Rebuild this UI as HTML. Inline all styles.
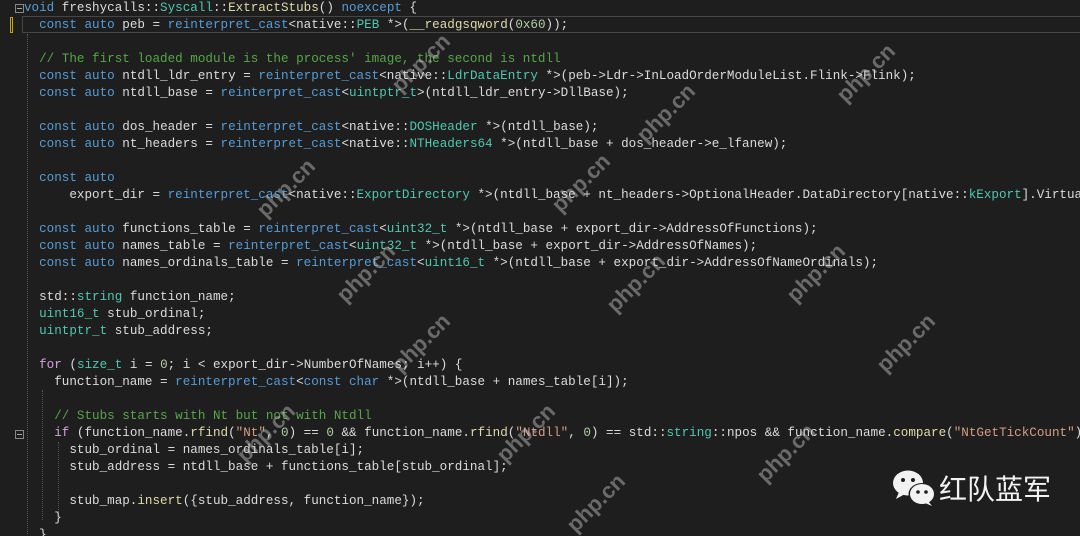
<!DOCTYPE html>
<html><head><meta charset="utf-8"><style>
html,body{margin:0;padding:0;width:1080px;height:536px;overflow:hidden;background:#1e1e1e;}
.ed{position:absolute;left:0;top:0;width:1080px;height:536px;overflow:hidden;font-family:"Liberation Mono",monospace;font-size:12.6px;color:#dcdcdc;}
.l{position:absolute;left:24px;height:17px;line-height:17px;white-space:pre;}
.k{color:#569cd6}.t{color:#4ec9b0}.f{color:#dcdcaa}.c{color:#57a64a}.s{color:#d69d85}.n{color:#b5cea8}.p{color:#d8a0df}.g{color:#b4b4b4}
.cur{position:absolute;left:22px;top:16px;width:1060px;height:17px;border:1px solid #464646;box-sizing:border-box;}
.mk{position:absolute;left:10px;top:17px;width:3px;height:16px;border:1px solid #c8a800;box-sizing:border-box;}
.guide{position:absolute;width:0;border-left:1px dotted #555;}
.fold{position:absolute;width:7px;height:7px;border:1px solid #888;font-size:0;}
.fold:after{content:"";position:absolute;left:1px;top:3px;width:5px;height:1px;background:#aaa;}
.wm{position:absolute;color:rgba(200,200,200,0.45);font-family:"Liberation Sans",sans-serif;font-weight:bold;font-size:22px;transform:rotate(-45deg);white-space:nowrap;}
.logo{position:absolute;left:893px;top:468px;font-family:"Liberation Sans","Noto Sans CJK SC",sans-serif;font-size:28px;color:#f2f2f2;}
</style></head><body><div class="ed">
<div class="cur"></div><div class="mk"></div>
<div class="fold" style="left:15px;top:4px"></div>
<div class="fold" style="left:15px;top:430px"></div>
<div class="guide" style="left:27px;top:34px;height:500px"></div>
<div class="guide" style="left:42px;top:390px;height:130px"></div>
<div class="guide" style="left:58px;top:442px;height:70px"></div>
<div class="l" style="top:0px"><span class="k">void</span> freshycalls::<span class="t">Syscall</span>::<span class="f">ExtractStubs</span>() <span class="k">noexcept</span> {</div>
<div class="l" style="top:17px">  <span class="k">const</span> <span class="k">auto</span> peb = <span class="k">reinterpret_cast</span>&lt;native::<span class="t">PEB</span> *&gt;(<span class="f">__readgsqword</span>(<span class="n">0x60</span>));</div>
<div class="l" style="top:51px">  <span class="c">// The first loaded module is the process' image, the second is ntdll</span></div>
<div class="l" style="top:68px">  <span class="k">const</span> <span class="k">auto</span> ntdll_ldr_entry = <span class="k">reinterpret_cast</span>&lt;native::<span class="t">LdrDataEntry</span> *&gt;(peb-&gt;Ldr-&gt;InLoadOrderModuleList.Flink-&gt;Flink);</div>
<div class="l" style="top:85px">  <span class="k">const</span> <span class="k">auto</span> ntdll_base = <span class="k">reinterpret_cast</span>&lt;<span class="t">uintptr_t</span>&gt;(ntdll_ldr_entry-&gt;DllBase);</div>
<div class="l" style="top:119px">  <span class="k">const</span> <span class="k">auto</span> dos_header = <span class="k">reinterpret_cast</span>&lt;native::<span class="t">DOSHeader</span> *&gt;(ntdll_base);</div>
<div class="l" style="top:136px">  <span class="k">const</span> <span class="k">auto</span> nt_headers = <span class="k">reinterpret_cast</span>&lt;native::<span class="t">NTHeaders64</span> *&gt;(ntdll_base + dos_header-&gt;e_lfanew);</div>
<div class="l" style="top:170px">  <span class="k">const</span> <span class="k">auto</span></div>
<div class="l" style="top:187px">      export_dir = <span class="k">reinterpret_cast</span>&lt;native::<span class="t">ExportDirectory</span> *&gt;(ntdll_base + nt_headers-&gt;OptionalHeader.DataDirectory[native::<span class="t">kExport</span>].Virtua</div>
<div class="l" style="top:221px">  <span class="k">const</span> <span class="k">auto</span> functions_table = <span class="k">reinterpret_cast</span>&lt;<span class="t">uint32_t</span> *&gt;(ntdll_base + export_dir-&gt;AddressOfFunctions);</div>
<div class="l" style="top:238px">  <span class="k">const</span> <span class="k">auto</span> names_table = <span class="k">reinterpret_cast</span>&lt;<span class="t">uint32_t</span> *&gt;(ntdll_base + export_dir-&gt;AddressOfNames);</div>
<div class="l" style="top:255px">  <span class="k">const</span> <span class="k">auto</span> names_ordinals_table = <span class="k">reinterpret_cast</span>&lt;<span class="t">uint16_t</span> *&gt;(ntdll_base + export_dir-&gt;AddressOfNameOrdinals);</div>
<div class="l" style="top:289px">  std::<span class="t">string</span> function_name;</div>
<div class="l" style="top:306px">  <span class="t">uint16_t</span> stub_ordinal;</div>
<div class="l" style="top:323px">  <span class="t">uintptr_t</span> stub_address;</div>
<div class="l" style="top:357px">  <span class="p">for</span> (<span class="t">size_t</span> i = <span class="n">0</span>; i &lt; export_dir-&gt;NumberOfNames; i++) {</div>
<div class="l" style="top:374px">    function_name = <span class="k">reinterpret_cast</span>&lt;<span class="k">const</span> <span class="k">char</span> *&gt;(ntdll_base + names_table[i]);</div>
<div class="l" style="top:408px">    <span class="c">// Stubs starts with Nt but not with Ntdll</span></div>
<div class="l" style="top:425px">    <span class="p">if</span> (function_name.<span class="f">rfind</span>(<span class="s">"Nt"</span>, <span class="n">0</span>) == <span class="n">0</span> &amp;&amp; function_name.<span class="f">rfind</span>(<span class="s">"Ntdll"</span>, <span class="n">0</span>) == std::<span class="t">string</span>::npos &amp;&amp; function_name.<span class="f">compare</span>(<span class="s">"NtGetTickCount"</span>)</div>
<div class="l" style="top:442px">      stub_ordinal = names_ordinals_table[i];</div>
<div class="l" style="top:459px">      stub_address = ntdll_base + functions_table[stub_ordinal];</div>
<div class="l" style="top:493px">      stub_map.<span class="f">insert</span>({stub_address, function_name});</div>
<div class="l" style="top:510px">    }</div>
<div class="l" style="top:527px">  }</div>
<div class="wm" style="left:385px;top:50px">php.cn</div>
<div class="wm" style="left:630px;top:100px">php.cn</div>
<div class="wm" style="left:830px;top:60px">php.cn</div>
<div class="wm" style="left:250px;top:175px">php.cn</div>
<div class="wm" style="left:545px;top:170px">php.cn</div>
<div class="wm" style="left:780px;top:260px">php.cn</div>
<div class="wm" style="left:330px;top:260px">php.cn</div>
<div class="wm" style="left:600px;top:270px">php.cn</div>
<div class="wm" style="left:385px;top:330px">php.cn</div>
<div class="wm" style="left:870px;top:330px">php.cn</div>
<div class="wm" style="left:230px;top:420px">php.cn</div>
<div class="wm" style="left:490px;top:420px">php.cn</div>
<div class="wm" style="left:750px;top:440px">php.cn</div>
<div class="wm" style="left:560px;top:490px">php.cn</div>
<svg style="position:absolute;left:891px;top:468px" width="48" height="40" viewBox="0 0 48 40">
<ellipse cx="17" cy="15" rx="15" ry="12.5" fill="#f2f2f2"/><path d="M8 24 L5 31 L14 26 Z" fill="#f2f2f2"/>
<circle cx="12" cy="12" r="2" fill="#1e1e1e"/><circle cx="22" cy="12" r="2" fill="#1e1e1e"/>
<ellipse cx="31" cy="26" rx="13.5" ry="11" fill="#1e1e1e"/><ellipse cx="31" cy="26" rx="12" ry="10" fill="#f2f2f2"/><path d="M37 33 L41 38 L34 35 Z" fill="#f2f2f2"/>
<circle cx="27" cy="24" r="1.8" fill="#1e1e1e"/><circle cx="35" cy="24" r="1.8" fill="#1e1e1e"/></svg>
<div class="logo" style="left:939px">红队蓝军</div>
</div></body></html>
